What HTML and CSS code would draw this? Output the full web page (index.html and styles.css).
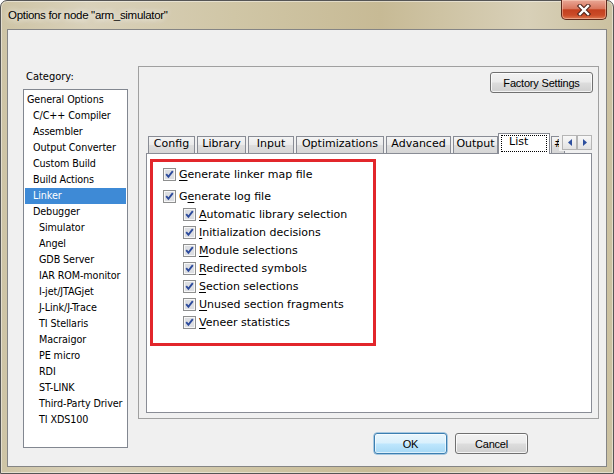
FILE: index.html
```html
<!DOCTYPE html>
<html>
<head>
<meta charset="utf-8">
<title>Options for node "arm_simulator"</title>
<link rel="stylesheet" href="styles.css">
</head>
<body>
<div class="window">
  <div class="titlebar">
    <span class="title">Options for node "arm_simulator"</span>
    <div class="close">
      <svg width="16" height="12" viewBox="0 0 16 12">
        <path d="M4 2 L12 10 M12 2 L4 10" stroke="#4c2219" stroke-width="4.4" stroke-linecap="square" fill="none"/>
        <path d="M4 2 L12 10 M12 2 L4 10" stroke="#ffffff" stroke-width="2.4" stroke-linecap="square" fill="none"/>
      </svg>
    </div>
  </div>
  <div class="client">
    <div class="leftcol">
      <div class="cat-label">Category:</div>
      <div class="catlist">
        <div class="item l0">General Options</div>
        <div class="item l1">C/C++ Compiler</div>
        <div class="item l1">Assembler</div>
        <div class="item l1">Output Converter</div>
        <div class="item l1">Custom Build</div>
        <div class="item l1">Build Actions</div>
        <div class="item l1 sel">Linker</div>
        <div class="item l1">Debugger</div>
        <div class="item l2">Simulator</div>
        <div class="item l2">Angel</div>
        <div class="item l2">GDB Server</div>
        <div class="item l2">IAR ROM-monitor</div>
        <div class="item l2">I-jet/JTAGjet</div>
        <div class="item l2">J-Link/J-Trace</div>
        <div class="item l2">TI Stellaris</div>
        <div class="item l2">Macraigor</div>
        <div class="item l2">PE micro</div>
        <div class="item l2">RDI</div>
        <div class="item l2">ST-LINK</div>
        <div class="item l2">Third-Party Driver</div>
        <div class="item l2">TI XDS100</div>
      </div>
    </div>
    <div class="rightcol">
      <div class="panel">
        <div class="panel-top">
          <button class="btn factory">Factory Settings</button>
        </div>
        <div class="tabs">
          <div class="tab w-config">Config</div>
          <div class="tab w-library">Library</div>
          <div class="tab w-input">Input</div>
          <div class="tab w-opt">Optimizations</div>
          <div class="tab w-adv">Advanced</div>
          <div class="tab w-out">Output</div>
          <div class="tab active w-list"><span class="focus">List</span></div>
          <div class="tab w-hash">#</div>
          <div class="spin">
            <div class="spinbtn">
              <svg width="4" height="7" viewBox="0 0 4 7"><path d="M4 0 L0 3.5 L4 7 Z" fill="#2d4f9e"/></svg>
            </div>
            <div class="spinbtn">
              <svg width="4" height="7" viewBox="0 0 4 7"><path d="M0 0 L4 3.5 L0 7 Z" fill="#2d4f9e"/></svg>
            </div>
          </div>
        </div>
        <div class="tabpanel">
          <div class="redbox">
            <div class="row first">
              <svg class="cb" width="13" height="13" viewBox="0 0 13 13"><rect x="0.5" y="0.5" width="12" height="12" fill="#f7f7f7" stroke="#8e8f8f"/><rect x="2" y="2" width="9" height="9" fill="#dcdee2"/><path d="M3.2 6.2 L5.4 8.8 L9.8 3.2" fill="none" stroke="#2c4a9c" stroke-width="1.9"/></svg>
              <span><u>G</u>enerate linker map file</span>
            </div>
            <div class="row">
              <svg class="cb" width="13" height="13" viewBox="0 0 13 13"><rect x="0.5" y="0.5" width="12" height="12" fill="#f7f7f7" stroke="#8e8f8f"/><rect x="2" y="2" width="9" height="9" fill="#dcdee2"/><path d="M3.2 6.2 L5.4 8.8 L9.8 3.2" fill="none" stroke="#2c4a9c" stroke-width="1.9"/></svg>
              <span>G<u>e</u>nerate log file</span>
            </div>
            <div class="row sub">
              <svg class="cb" width="13" height="13" viewBox="0 0 13 13"><rect x="0.5" y="0.5" width="12" height="12" fill="#f7f7f7" stroke="#8e8f8f"/><rect x="2" y="2" width="9" height="9" fill="#dcdee2"/><path d="M3.2 6.2 L5.4 8.8 L9.8 3.2" fill="none" stroke="#2c4a9c" stroke-width="1.9"/></svg>
              <span><u>A</u>utomatic library selection</span>
            </div>
            <div class="row sub">
              <svg class="cb" width="13" height="13" viewBox="0 0 13 13"><rect x="0.5" y="0.5" width="12" height="12" fill="#f7f7f7" stroke="#8e8f8f"/><rect x="2" y="2" width="9" height="9" fill="#dcdee2"/><path d="M3.2 6.2 L5.4 8.8 L9.8 3.2" fill="none" stroke="#2c4a9c" stroke-width="1.9"/></svg>
              <span><u>I</u>nitialization decisions</span>
            </div>
            <div class="row sub">
              <svg class="cb" width="13" height="13" viewBox="0 0 13 13"><rect x="0.5" y="0.5" width="12" height="12" fill="#f7f7f7" stroke="#8e8f8f"/><rect x="2" y="2" width="9" height="9" fill="#dcdee2"/><path d="M3.2 6.2 L5.4 8.8 L9.8 3.2" fill="none" stroke="#2c4a9c" stroke-width="1.9"/></svg>
              <span><u>M</u>odule selections</span>
            </div>
            <div class="row sub">
              <svg class="cb" width="13" height="13" viewBox="0 0 13 13"><rect x="0.5" y="0.5" width="12" height="12" fill="#f7f7f7" stroke="#8e8f8f"/><rect x="2" y="2" width="9" height="9" fill="#dcdee2"/><path d="M3.2 6.2 L5.4 8.8 L9.8 3.2" fill="none" stroke="#2c4a9c" stroke-width="1.9"/></svg>
              <span><u>R</u>edirected symbols</span>
            </div>
            <div class="row sub">
              <svg class="cb" width="13" height="13" viewBox="0 0 13 13"><rect x="0.5" y="0.5" width="12" height="12" fill="#f7f7f7" stroke="#8e8f8f"/><rect x="2" y="2" width="9" height="9" fill="#dcdee2"/><path d="M3.2 6.2 L5.4 8.8 L9.8 3.2" fill="none" stroke="#2c4a9c" stroke-width="1.9"/></svg>
              <span><u>S</u>ection selections</span>
            </div>
            <div class="row sub">
              <svg class="cb" width="13" height="13" viewBox="0 0 13 13"><rect x="0.5" y="0.5" width="12" height="12" fill="#f7f7f7" stroke="#8e8f8f"/><rect x="2" y="2" width="9" height="9" fill="#dcdee2"/><path d="M3.2 6.2 L5.4 8.8 L9.8 3.2" fill="none" stroke="#2c4a9c" stroke-width="1.9"/></svg>
              <span><u>U</u>nused section fragments</span>
            </div>
            <div class="row sub">
              <svg class="cb" width="13" height="13" viewBox="0 0 13 13"><rect x="0.5" y="0.5" width="12" height="12" fill="#f7f7f7" stroke="#8e8f8f"/><rect x="2" y="2" width="9" height="9" fill="#dcdee2"/><path d="M3.2 6.2 L5.4 8.8 L9.8 3.2" fill="none" stroke="#2c4a9c" stroke-width="1.9"/></svg>
              <span><u>V</u>eneer statistics</span>
            </div>
          </div>
        </div>
      </div>
      <div class="buttons">
        <button class="btn default">OK</button>
        <button class="btn">Cancel</button>
      </div>
    </div>
  </div>
</div>
</body>
</html>
```

FILE: styles.css
```css
* { box-sizing: border-box; }
html, body { margin: 0; padding: 0; }
body { width: 614px; height: 474px; overflow: hidden; background: #ffffff; }

.window {
  width: 614px;
  height: 474px;
  border: 1px solid #555555;
  border-radius: 7px 7px 0 0;
  background: linear-gradient(90deg, #cec4a5 0%, #d9d1ba 14%, #d0c6a6 38%, #c7ba95 62%, #d8d0b8 86%, #cbc1a0 100%);
  box-shadow: inset 0 0 0 1px rgba(255, 255, 255, 0.45);
  padding: 0 6px 6px 6px;
  display: flex;
  flex-direction: column;
}

.titlebar {
  height: 28px;
  display: flex;
  justify-content: space-between;
  align-items: flex-start;
}
.title {
  font-family: "Liberation Sans", Arial, sans-serif;
  font-size: 11.5px;
  letter-spacing: -0.3px;
  line-height: 14px;
  color: #000000;
  margin: 7px 0 0 1px;
  text-shadow: 0 0 6px rgba(255, 255, 255, 0.9), 0 0 10px rgba(255, 255, 255, 0.7);
}
.close {
  width: 46px;
  height: 20px;
  margin-top: -1px;
  border: 1px solid #5e2a1c;
  border-top: none;
  border-radius: 0 0 5px 5px;
  background: linear-gradient(#e9a796 0%, #d9775e 45%, #c3401f 52%, #cb4b28 80%, #dd7a52 100%);
  box-shadow: inset 0 0 0 1px rgba(255, 220, 200, 0.45);
  display: flex;
  align-items: center;
  justify-content: center;
}

.client {
  height: 438px;
  border: 1px solid #858585;
  background: #f0f0f0;
  display: flex;
  padding: 36px 7px 0 15px;
}

.leftcol {
  width: 105px;
  margin-top: 5px;
  margin-right: 10px;
  flex: none;
}
.cat-label {
  height: 18px;
  padding-left: 3px;
  font-family: "DejaVu Sans Condensed", "Liberation Sans", sans-serif;
  font-stretch: condensed;
  font-size: 11px;
  line-height: 12px;
  color: #000000;
}
.catlist {
  height: 359px;
  border: 1px solid #828790;
  background: #ffffff;
  padding: 2px 1px;
}
.item {
  height: 16px;
  line-height: 16px;
  font-family: "DejaVu Sans Condensed", "Liberation Sans", sans-serif;
  font-stretch: condensed;
  font-size: 10.7px;
  letter-spacing: -0.1px;
  color: #000000;
  white-space: nowrap;
}
.l0 { padding-left: 2px; }
.l1 { padding-left: 8px; }
.l2 { padding-left: 14px; }
.sel { background: #3e8ad6; color: #ffffff; }

.rightcol {
  width: 461px;
  flex: none;
  display: flex;
  flex-direction: column;
}
.panel {
  height: 353px;
  border: 1px solid #a0a0a0;
  padding: 5px 5px 0 7px;
  display: flex;
  flex-direction: column;
}
.panel-top {
  display: flex;
  justify-content: flex-end;
}

.btn {
  height: 21px;
  padding: 0;
  border: 1px solid #707070;
  border-radius: 3px;
  background: linear-gradient(#f2f2f2 0%, #ebebeb 48%, #dddddd 52%, #cfcfcf 100%);
  box-shadow: inset 0 0 0 1px rgba(255, 255, 255, 0.75);
  font-family: "Liberation Sans", Arial, sans-serif;
  font-size: 11px;
  letter-spacing: -0.2px;
  color: #000000;
  width: 73px;
}
.factory { width: 103px; }
.btn.default {
  border-color: #3c7fb1;
  background: linear-gradient(#eaf6fd 0%, #d9f0fc 48%, #bee6fd 52%, #a7d9f5 100%);
  box-shadow: inset 0 0 0 1px rgba(255, 255, 255, 0.6), 0 0 0 0.5px #60a0d0;
}

.tabs {
  position: relative;
  width: 446px;
  height: 20px;
  margin-top: 40px;
  padding-left: 2px;
  display: flex;
  align-items: flex-end;
}
.tab {
  flex: none;
  height: 17px;
  margin-right: 2px;
  border: 1px solid #898c95;
  border-bottom: none;
  background: linear-gradient(#f4f4f4 0%, #ebebeb 48%, #dedede 52%, #d6d6d6 100%);
  font-family: "DejaVu Sans", sans-serif;
  font-size: 11px;
  line-height: 14px;
  text-align: center;
  color: #000000;
  white-space: nowrap;
  overflow: hidden;
}
.w-config { width: 47px; }
.w-library { width: 49px; }
.w-input { width: 46px; }
.w-opt { width: 88px; }
.w-adv { width: 65px; }
.w-out { width: 45px; }
.w-list { width: 52px; }
.w-hash { width: 14px; text-align: left; padding-left: 2px; }
.tab.active {
  height: 21px;
  margin-left: -2px;
  margin-right: 1px;
  margin-bottom: -1px;
  background: #ffffff;
  position: relative;
  z-index: 1;
  padding: 1px 2px 0 2px;
}
.focus {
  display: block;
  height: 17px;
  border: 1px dotted #000000;
  line-height: 12px;
  text-align: left;
  padding-left: 7px;
}
.spin {
  position: absolute;
  right: 0;
  top: 1px;
  display: flex;
  padding: 1px 0 1px 3px;
  background: #f0f0f0;
  z-index: 2;
}
.spinbtn {
  width: 15px;
  height: 15px;
  border: 1px solid #b5b5b5;
  background: linear-gradient(#f8f8f8, #e2e2e2);
  display: flex;
  align-items: center;
  justify-content: center;
}

.tabpanel {
  width: 446px;
  height: 260px;
  border: 1px solid #898c95;
  background: #ffffff;
  padding: 5px 0 0 3px;
}
.redbox {
  width: 226px;
  height: 187px;
  border: 3px solid #e2262b;
  padding: 3px 0 0 10px;
}
.row {
  height: 18px;
  display: flex;
  align-items: center;
  font-family: "DejaVu Sans", sans-serif;
  font-size: 11px;
  color: #000000;
  white-space: nowrap;
}
.row.first { margin-bottom: 4px; }
.row.sub { padding-left: 20px; }
.cb { flex: none; margin-right: 3px; }
.row u { text-underline-offset: 2px; }

.buttons {
  display: flex;
  justify-content: flex-end;
  gap: 8px;
  margin-top: 14px;
  padding-right: 71px;
}
```
